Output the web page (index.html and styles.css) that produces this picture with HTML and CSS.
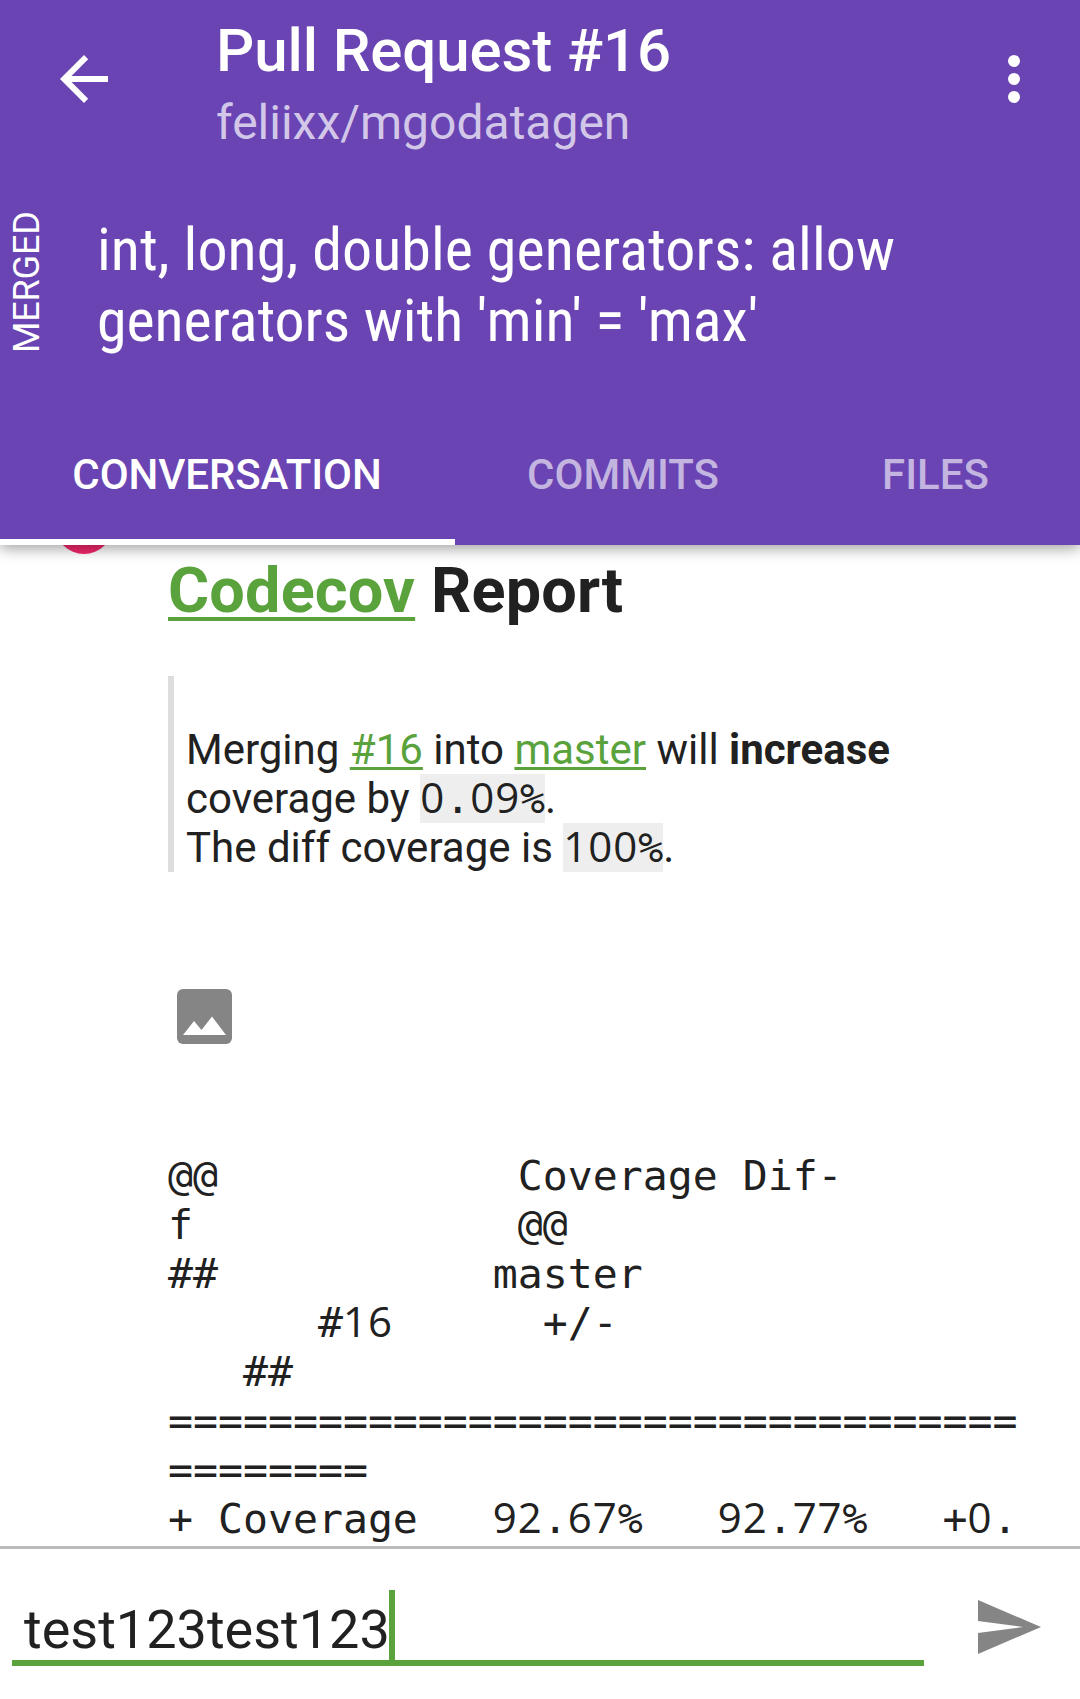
FILE: index.html
```html
<!DOCTYPE html>
<html lang="en"><head><meta charset="utf-8"><title>Pull Request #16</title><link rel="stylesheet" href="styles.css"></head>
<body>
<header class="header">
  <div class="toolbar">
    <svg class="back" viewBox="0 0 48 48"><path d="M48 21H11.5L28.2 4.2 24 0 0 24l24 24 4.2-4.2L11.5 27H48z" fill="#fff"/></svg>
    <div class="titles"><h1 class="title">Pull Request #16</h1><div class="repo">feliixx/mgodatagen</div></div>
    <svg class="more" viewBox="0 0 12 48"><circle cx="6" cy="6" r="6"/><circle cx="6" cy="24" r="6"/><circle cx="6" cy="42" r="6"/></svg>
  </div>
  <div class="summary"><div class="state">MERGED</div><div class="subject"><div>int, long, double generators: allow</div><div class="second">generators with 'min' = 'max'</div></div></div>
  <nav class="tabs"><div class="tab active">CONVERSATION</div><div class="tab commits">COMMITS</div><div class="tab files">FILES</div></nav>
</header>
<main class="content">
  <svg class="avatar" viewBox="0 0 58 58"><circle cx="29" cy="29" r="29" fill="#f5286c"/></svg>
  <h2 class="report"><a>Codecov</a> Report</h2>
  <blockquote class="quote"><div>Merging <a>#16</a> into <a>master</a> will <b>increase</b></div><div>coverage by <code><span class="num">0</span>.<span class="num">09</span>%</code>.</div><div>The diff coverage is <code><span class="num">100</span>%</code>.</div></blockquote>
  <svg class="image" viewBox="0 0 55 55"><rect width="55" height="55" rx="6" fill="#858585"/><path d="M6 46 17 32l7.500 9L35 27.500 49 46z" fill="#fff"/></svg>
<pre class="diff">@@            Coverage Dif-
f             @@
##           master
      #<span class="num">16</span>      +/-
   ##
==================================
========
+ Coverage   <span class="num">92</span>.<span class="num">67</span>%   <span class="num">92</span>.<span class="num">77</span>%   +<span class="num">0</span>.</pre>
</main>
<footer class="composer"><div class="input"><span>test123test123</span><i class="caret"></i></div><svg class="send" viewBox="0 0 63 54"><path d="M0 0 63 27 0 54V33l45-6L0 21z" fill="#858585"/></svg></footer>
</body></html>
```
FILE: styles.css
```css
*{box-sizing:border-box}
body{margin:0;width:1080px;height:1699px;overflow:hidden;background:#fff;color:#212121;font-family:Roboto,sans-serif;display:flex;flex-direction:column}
.header{height:545px;flex:none;background:#6944b2;color:#fff;box-shadow:0 3px 14px rgba(0,0,0,.4);position:relative;z-index:1}
.toolbar{height:190px;display:flex}
.back{width:48px;height:48px;margin:55px 0 0 60px}
.titles{margin-left:108px;width:780px}
.title{margin:21px 0 0;font-size:60px;line-height:60px;font-weight:500;white-space:nowrap;letter-spacing:-.1px}
.repo{font-size:48px;line-height:60px;margin-top:12px;color:#d2c7e8}
.more{width:12px;height:48px;margin:55px 0 0 12px;fill:#fff}
.summary{height:224px;display:flex}
.state{width:54px;height:184px;writing-mode:vertical-rl;transform:rotate(180deg);font-size:36px;line-height:54px;text-align:center;letter-spacing:-.15px}
.subject{margin:24px 0 0 43px;font-family:"Roboto Condensed",Roboto,sans-serif;font-stretch:75%;font-size:60px;line-height:71px;white-space:nowrap;letter-spacing:.08px}
.second{letter-spacing:-.06px}
.tabs{height:131px;display:flex}
.tab{font-size:42px;font-weight:500;line-height:121px;text-align:center;color:#c3b4e0}
.active{width:455px;padding-right:1px;color:#fff;border-bottom:6px solid #fff;letter-spacing:-.08px}
.commits{width:336px}
.files{width:289px}
.content{height:1001px;flex:none;overflow:hidden;padding-left:168px;position:relative}
.avatar{position:absolute;left:55px;top:-49px;width:58px;height:58px}
a{color:#5aa23c;text-decoration:underline;text-decoration-thickness:3px;text-underline-offset:3px;text-decoration-skip-ink:none}
.report{margin:9px 0 0;font-size:63px;line-height:74px;font-weight:700;letter-spacing:.15px}
.report a{text-decoration-thickness:4px;text-underline-offset:5px}
.quote{margin:48px 0 0;border-left:6px solid #ddd;height:196px;padding:49px 0 0 12px;font-size:42px;line-height:49px;white-space:nowrap}
.quote div{height:49px}
code{display:inline-block;height:49px;vertical-align:top;font:41.5px/49px "DejaVu Sans Mono",monospace;background:#eee}
.num{font-family:"Open Sans",sans-serif;font-size:42px;line-height:1;letter-spacing:.96px}
.image{display:block;width:55px;height:55px;margin:117px 0 0 9px}
.diff{margin:107px 0 0;font:41.5px/49px "DejaVu Sans Mono",monospace}
.composer{height:153px;border-top:3px solid #bbb;display:flex}
.input{width:912px;height:117px;margin-left:12px;border-bottom:6px solid #5aa23c;padding-left:12px;font-size:54px;line-height:162px;display:flex}
.caret{width:6px;height:70px;margin:41px 0 0 -1px;background:#5aa23c}
.send{width:63px;height:54px;margin:51px 0 0 54px}
```
